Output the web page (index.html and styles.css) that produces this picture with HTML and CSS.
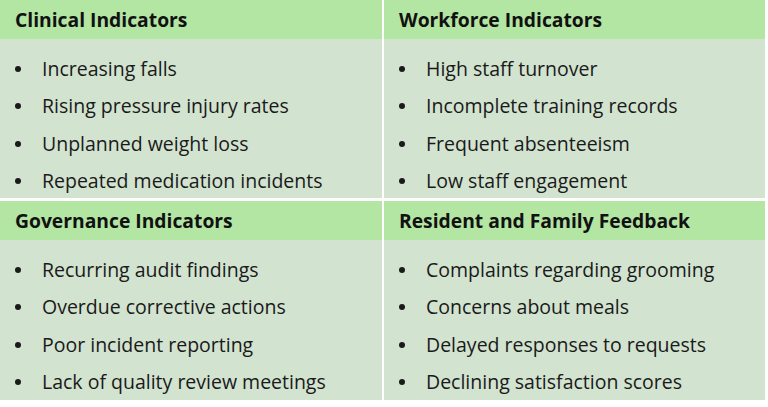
FILE: index.html
```html
<!DOCTYPE html>
<html>
<head>
<meta charset="utf-8">
<link rel="stylesheet" href="styles.css">
</head>
<body>
<div class="grid">
  <section class="cell">
    <h2 class="head">Clinical Indicators</h2>
    <ul class="list">
      <li>Increasing falls</li>
      <li>Rising pressure injury rates</li>
      <li>Unplanned weight loss</li>
      <li>Repeated medication incidents</li>
    </ul>
  </section>
  <section class="cell">
    <h2 class="head">Workforce Indicators</h2>
    <ul class="list">
      <li>High staff turnover</li>
      <li>Incomplete training records</li>
      <li>Frequent absenteeism</li>
      <li>Low staff engagement</li>
    </ul>
  </section>
  <section class="cell">
    <h2 class="head">Governance Indicators</h2>
    <ul class="list">
      <li>Recurring audit findings</li>
      <li>Overdue corrective actions</li>
      <li>Poor incident reporting</li>
      <li>Lack of quality review meetings</li>
    </ul>
  </section>
  <section class="cell">
    <h2 class="head">Resident and Family Feedback</h2>
    <ul class="list">
      <li>Complaints regarding grooming</li>
      <li>Concerns about meals</li>
      <li>Delayed responses to requests</li>
      <li>Declining satisfaction scores</li>
    </ul>
  </section>
</div>
</body>
</html>
```
FILE: styles.css
```css
html, body {
  margin: 0;
  padding: 0;
  background: #ffffff;
}
body {
  font-family: "Open Sans", "Noto Sans", sans-serif;
  color: #1a1a1a;
}
.grid {
  width: 765px;
  display: grid;
  grid-template-columns: 382px 381px;
  grid-template-rows: 198px 199px;
  column-gap: 2px;
  row-gap: 3px;
}
.cell {
  display: flex;
  flex-direction: column;
  background: #d2e3d0;
}
.head {
  margin: 0;
  height: 39px;
  box-sizing: border-box;
  padding-left: 15px;
  background: #b3e5a3;
  font-size: 19.3px;
  font-weight: 700;
  line-height: 39px;
  color: #111;
}
.list {
  margin: 0;
  padding: 11px 0 0 0;
  list-style: none;
}
.list li {
  position: relative;
  padding-left: 42px;
  font-size: 19.5px;
  line-height: 37.3px;
  white-space: nowrap;
}
.list li::before {
  content: "";
  position: absolute;
  left: 15px;
  top: 16px;
  width: 6px;
  height: 6px;
  border-radius: 50%;
  background: #1a1a1a;
}
```
